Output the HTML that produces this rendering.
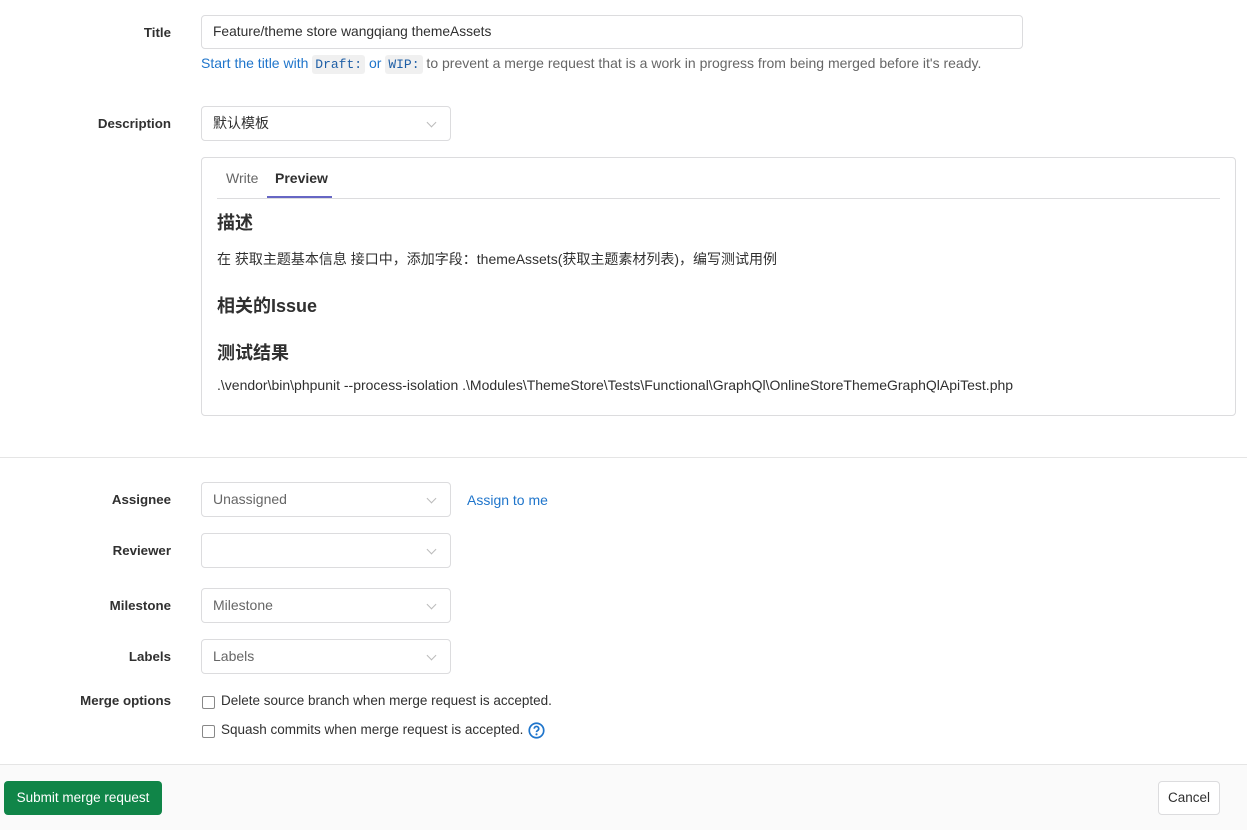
<!DOCTYPE html>
<html><head><meta charset="utf-8"><style>
body{margin:0;width:1247px;height:829px;background:#fff;font-family:"Liberation Sans","Noto Sans CJK SC",sans-serif;font-size:14px;color:#303030;position:relative;overflow:hidden}
.a{position:absolute}
.lbl{position:absolute;right:1076px;font-weight:bold;font-size:13.3px;color:#303030;white-space:nowrap}
.inp{position:absolute;border:1px solid #dcdcde;border-radius:4px;box-sizing:border-box;background:#fff;padding-left:11px;font-size:14px;white-space:nowrap}
.sel{width:250px;height:35px;line-height:33px;color:#666}
.sel:after{content:"";position:absolute;right:15px;top:12px;width:6px;height:6px;border-right:1.5px solid #bbb;border-bottom:1.5px solid #bbb;transform:rotate(45deg)}
code{font-family:"Liberation Mono",monospace;background:#f0f0f0;color:#1f5fa6;padding:2px 3px;border-radius:3px;font-size:13px}
.cb{position:absolute;width:11px;height:11px;border:1.5px solid #888;border-radius:2px}
h3{margin:0;font-size:18px;font-weight:bold;position:absolute;left:217px;color:#303030}
</style></head><body>
<div class="lbl" style="top:25px">Title</div>
<div class="inp" style="left:201px;top:15px;width:822px;height:34px;line-height:32px;color:#303030;font-size:13.8px">Feature/theme store wangqiang themeAssets</div>
<div class="a" style="left:201px;top:55px;color:#666;font-size:14px;white-space:nowrap"><span style="color:#1f75cb">Start the title with</span> <code>Draft:</code> <span style="color:#1f75cb">or</span> <code>WIP:</code> to prevent a merge request that is a work in progress from being merged before it's ready.</div>
<div class="lbl" style="top:116px">Description</div>
<div class="inp sel" style="left:201px;top:106px;color:#303030">默认模板</div>
<div class="a" style="left:201px;top:157px;width:1035px;height:259px;border:1px solid #dcdcde;border-radius:4px;box-sizing:border-box"></div>
<div class="a" style="left:217px;top:198px;width:1003px;height:1px;background:#dcdcde"></div>
<div class="a" style="left:226px;top:170px;color:#666">Write</div>
<div class="a" style="left:275px;top:170px;font-weight:bold;color:#303030">Preview</div>
<div class="a" style="left:267px;top:196px;width:65px;height:2px;background:#6666c4"></div>
<h3 style="top:209px">描述</h3>
<div class="a" style="left:217px;top:249px;font-size:14px;white-space:nowrap">在 获取主题基本信息 接口中，添加字段：themeAssets(获取主题素材列表)，编写测试用例</div>
<h3 style="top:292px">相关的Issue</h3>
<h3 style="top:339px">测试结果</h3>
<div class="a" style="left:217px;top:377px;font-size:14px;white-space:nowrap">.\vendor\bin\phpunit --process-isolation .\Modules\ThemeStore\Tests\Functional\GraphQl\OnlineStoreThemeGraphQlApiTest.php</div>
<div class="a" style="left:0;top:457px;width:1247px;height:1px;background:#e5e5e5"></div>
<div class="lbl" style="top:492px">Assignee</div>
<div class="inp sel" style="left:201px;top:482px">Unassigned</div>
<div class="a" style="left:467px;top:492px;color:#1f75cb">Assign to me</div>
<div class="lbl" style="top:543px">Reviewer</div>
<div class="inp sel" style="left:201px;top:533px"></div>
<div class="lbl" style="top:598px">Milestone</div>
<div class="inp sel" style="left:201px;top:588px">Milestone</div>
<div class="lbl" style="top:649px">Labels</div>
<div class="inp sel" style="left:201px;top:639px">Labels</div>
<div class="lbl" style="top:693px">Merge options</div>
<div class="cb" style="left:202px;top:696px"></div>
<div class="a" style="left:221px;top:693px;font-size:13.5px">Delete source branch when merge request is accepted.</div>
<div class="cb" style="left:202px;top:725px"></div>
<div class="a" style="left:221px;top:722px;font-size:13.5px">Squash commits when merge request is accepted.</div>
<svg class="a" style="left:528px;top:722px" width="17" height="17" viewBox="0 0 16 16"><circle cx="8" cy="8" r="6.8" fill="none" stroke="#1f75cb" stroke-width="1.6"/><path d="M5.9 6.3a2.1 2.1 0 1 1 2.9 1.9c-.6.3-.8.6-.8 1.3" fill="none" stroke="#1f75cb" stroke-width="1.6"/><circle cx="8" cy="11.6" r="1" fill="#1f75cb"/></svg>
<div class="a" style="left:0;top:764px;width:1247px;height:65px;background:#fafafa;border-top:1px solid #e5e5e5"></div>
<div class="a" style="left:4px;top:781px;width:158px;height:34px;background:#108548;border-radius:4px;color:#fff;line-height:34px;text-align:center;font-size:13.5px">Submit merge request</div>
<div class="a" style="left:1158px;top:781px;width:62px;height:34px;background:#fff;border:1px solid #dcdcde;box-sizing:border-box;border-radius:4px;line-height:32px;text-align:center;font-size:13.5px">Cancel</div>
</body></html>
